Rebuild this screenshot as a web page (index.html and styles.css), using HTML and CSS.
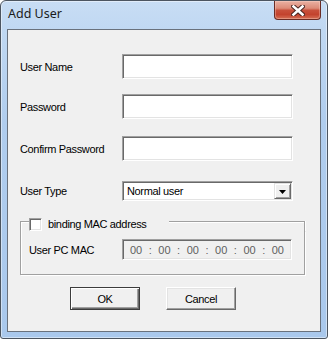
FILE: index.html
```html
<!DOCTYPE html>
<html>
<head>
<meta charset="utf-8">
<link rel="stylesheet" href="styles.css">
</head>
<body>
<div class="win">
  <div class="titlebar">
    <span class="title">Add User</span>
    <div class="close">
      <svg width="14" height="11" viewBox="0 0 14 11">
        <path d="M2.5 1.5 L11.5 9.5 M11.5 1.5 L2.5 9.5" stroke="#4a2520" stroke-width="4.6" stroke-linecap="square" fill="none"/>
        <path d="M2.5 1.5 L11.5 9.5 M11.5 1.5 L2.5 9.5" stroke="#ffffff" stroke-width="2.6" stroke-linecap="square" fill="none"/>
      </svg>
    </div>
  </div>
  <div class="client">
    <div class="row">
      <span class="lbl">User Name</span>
      <div class="edit"></div>
    </div>
    <div class="row r2">
      <span class="lbl">Password</span>
      <div class="edit"></div>
    </div>
    <div class="row r3">
      <span class="lbl">Confirm Password</span>
      <div class="edit"></div>
    </div>
    <div class="row r4">
      <span class="lbl">User Type</span>
      <div class="combo">
        <span class="ctext">Normal user</span>
        <span class="ddbtn">
          <svg width="7" height="4" viewBox="0 0 7 4"><polygon points="0,0 7,0 3.5,4" fill="#000"/></svg>
        </span>
      </div>
    </div>
    <div class="group">
      <div class="ghead">
        <span class="gl"></span>
        <span class="chk"></span>
        <span class="gtxt">binding MAC address</span>
        <span class="gr"></span>
      </div>
      <div class="gbody">
        <span class="lbl2">User PC MAC</span>
        <div class="mac">
          <span>00</span><span>:</span><span>00</span><span>:</span><span>00</span><span>:</span><span>00</span><span>:</span><span>00</span><span>:</span><span>00</span>
        </div>
      </div>
    </div>
    <div class="buttons">
      <div class="btn def">OK</div>
      <div class="btn">Cancel</div>
    </div>
  </div>
</div>
</body>
</html>
```

FILE: styles.css
```css
html, body {
  margin: 0;
  padding: 0;
  background: #ffffff;
}

.win {
  width: 328px;
  height: 339px;
  box-sizing: border-box;
  border: 1px solid #4c5560;
  border-radius: 6px 6px 3px 3px;
  background: linear-gradient(180deg, #c8ddf4 0px, #c0d8f2 28px, #b0cdee 120px, #a9c8ec 100%);
  box-shadow: inset 0 0 0 1px rgba(255, 255, 255, 0.45);
  padding: 0 6px 6px 6px;
  display: flex;
  flex-direction: column;
}

.titlebar {
  height: 28px;
  display: flex;
  justify-content: space-between;
  align-items: flex-start;
  flex: none;
}

.title {
  font-family: "Noto Sans", "Open Sans", sans-serif;
  font-size: 12.5px;
  line-height: 16px;
  color: #1b1b1b;
  margin: 5px 0 0 1px;
}

.close {
  width: 47px;
  height: 19px;
  box-sizing: border-box;
  border: 1px solid #6a2c25;
  border-top: none;
  border-radius: 0 0 4px 4px;
  background: linear-gradient(180deg, #eab1a3 0%, #dc8b78 40%, #c8503b 52%, #c3432e 75%, #d56f55 100%);
  box-shadow: inset 0 0 0 1px rgba(255, 220, 210, 0.35);
  display: flex;
  align-items: center;
  justify-content: center;
}

.close svg {
  display: block;
}

.client {
  flex: 1;
  border: 1px solid #69717c;
  background: #f0f0f0;
  padding: 24px 0 0 12px;
  font-family: "Liberation Sans", Arial, sans-serif;
  font-size: 11px;
  letter-spacing: -0.35px;
  white-space: nowrap;
  color: #000;
}

.row {
  display: flex;
  align-items: center;
  height: 25px;
}

.r2 { margin-top: 15px; }
.r3 { margin-top: 17px; }
.r4 { margin-top: 20px; height: 20px; }

.lbl {
  width: 102px;
  flex: none;
}

.edit {
  width: 171px;
  height: 25px;
  box-sizing: border-box;
  background: #ffffff;
  border: 1px solid;
  border-color: #a0a0a0 #ffffff #ffffff #a0a0a0;
  box-shadow: inset 1px 1px 0 #696969, inset -1px -1px 0 #e3e3e3;
}

.combo {
  width: 171px;
  height: 20px;
  box-sizing: border-box;
  background: #ffffff;
  border: 1px solid;
  border-color: #a0a0a0 #ffffff #ffffff #a0a0a0;
  box-shadow: inset 1px 1px 0 #696969, inset -1px -1px 0 #e3e3e3;
  padding: 1px 1px 1px 4px;
  display: flex;
  align-items: center;
  justify-content: space-between;
}

.ctext {
  line-height: 16px;
}

.ddbtn {
  width: 17px;
  height: 16px;
  box-sizing: border-box;
  background: #f0f0f0;
  border: 1px solid;
  border-color: #e3e3e3 #696969 #696969 #e3e3e3;
  box-shadow: inset 1px 1px 0 #ffffff, inset -1px -1px 0 #a0a0a0;
  display: flex;
  align-items: center;
  justify-content: center;
}

.ddbtn svg {
  display: block;
  margin: 1px 0 0 0;
}

.group {
  width: 285px;
  margin-top: 17px;
}

.ghead {
  display: flex;
  align-items: center;
  height: 13px;
}

.gl {
  width: 9px;
  height: 10px;
  box-sizing: border-box;
  align-self: flex-end;
  border-top: 1px solid #a0a0a0;
  border-left: 1px solid #a0a0a0;
  box-shadow: inset 1px 1px 0 #ffffff;
  flex: none;
}

.chk {
  width: 13px;
  height: 13px;
  box-sizing: border-box;
  background: #ffffff;
  border: 1px solid;
  border-color: #a0a0a0 #ffffff #ffffff #a0a0a0;
  box-shadow: inset 1px 1px 0 #696969, inset -1px -1px 0 #e3e3e3;
  flex: none;
}

.gtxt {
  margin-left: 6px;
  width: 121px;
  flex: none;
  line-height: 13px;
}

.gr {
  flex: 1;
  height: 10px;
  box-sizing: border-box;
  align-self: flex-end;
  border-top: 1px solid #a0a0a0;
  border-right: 1px solid #a0a0a0;
  box-shadow: inset 0 1px 0 #ffffff, 1px 0 0 #ffffff;
}

.gbody {
  border: 1px solid #a0a0a0;
  border-top: none;
  box-shadow: inset 1px 0 0 #ffffff, 1px 1px 0 #ffffff;
  padding: 8px 0 14px 8px;
  display: flex;
  align-items: center;
}

.lbl2 {
  width: 93px;
  flex: none;
}

.mac {
  width: 170px;
  height: 21px;
  box-sizing: border-box;
  background: #f0f0f0;
  border: 1px solid;
  border-color: #a0a0a0 #ffffff #ffffff #a0a0a0;
  box-shadow: inset 1px 1px 0 #696969, inset -1px -1px 0 #e3e3e3;
  padding: 0 7px;
  display: flex;
  align-items: center;
  justify-content: space-between;
  color: #5f5f5f;
  letter-spacing: 0;
}

.buttons {
  display: flex;
  gap: 26px;
  margin: 12px 0 0 50px;
}

.btn {
  width: 70px;
  height: 23px;
  box-sizing: border-box;
  background: #f0f0f0;
  border: 1px solid;
  border-color: #ffffff #696969 #696969 #ffffff;
  box-shadow: inset -1px -1px 0 #a0a0a0, inset 1px 1px 0 #e3e3e3;
  display: flex;
  align-items: center;
  justify-content: center;
}

.btn.def {
  border: 1px solid #3c3c3c;
  box-shadow: inset 1px 1px 0 #ffffff, inset -1px -1px 0 #696969, inset -2px -2px 0 #a0a0a0;
}
```
